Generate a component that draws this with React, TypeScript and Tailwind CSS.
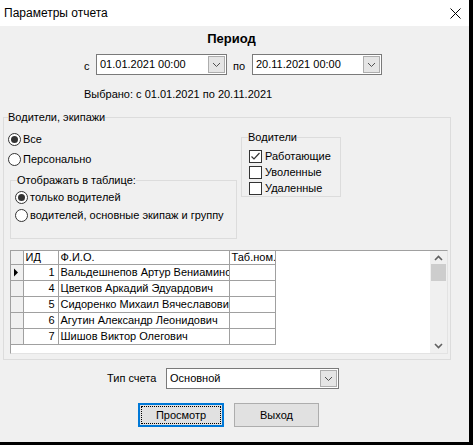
import React from 'react';

const rows = [
  { id: 1, name: 'Вальдешнепов Артур Вениаминович' },
  { id: 4, name: 'Цветков Аркадий Эдуардович' },
  { id: 5, name: 'Сидоренко Михаил Вячеславович' },
  { id: 6, name: 'Агутин Александр Леонидович' },
  { id: 7, name: 'Шишов Виктор Олегович' },
];

function Chevron({ up = false, bold = false }: { up?: boolean; bold?: boolean }) {
  return (
    <svg width="9" height="6" viewBox="0 0 9 6" className={up ? 'rotate-180' : ''}>
      <polyline
        points="1,1 4.5,4.5 8,1"
        fill="none"
        stroke={bold ? '#606060' : '#505050'}
        strokeWidth={bold ? 1.6 : 1}
      />
    </svg>
  );
}

function Combo({ value, width }: { value: string; width: string }) {
  return (
    <div className={`flex h-[21px] items-stretch border border-[#7a7a7a] bg-white ${width}`}>
      <span className="flex-1 overflow-hidden whitespace-nowrap pl-[3px] leading-[19px]">{value}</span>
      <span className="m-px flex w-[17px] items-center justify-center border border-[#adadad] bg-[#e5e5e5]">
        <Chevron />
      </span>
    </div>
  );
}

function Radio({ checked, label }: { checked?: boolean; label: string }) {
  return (
    <div className="flex h-[14px] items-center gap-[2px]">
      <span className="flex h-[13px] w-[13px] items-center justify-center rounded-full border border-[#333333] bg-white">
        {checked && <span className="h-[7px] w-[7px] rounded-full bg-[#333333]" />}
      </span>
      <span className="leading-[14px]">{label}</span>
    </div>
  );
}

function Check({ checked, label }: { checked?: boolean; label: string }) {
  return (
    <div className="flex h-[16px] items-center gap-[3px]">
      <span className="flex h-[13px] w-[13px] items-center justify-center border border-[#333333] bg-white">
        {checked && (
          <svg width="11" height="11" viewBox="0 0 11 11">
            <polyline points="1.5,5.5 4,8 9.5,2" fill="none" stroke="#333333" strokeWidth="1.2" />
          </svg>
        )}
      </span>
      <span className="leading-[14px]">{label}</span>
    </div>
  );
}

function Grid() {
  return (
    <div className="relative ml-[6px] mt-[11px] h-[104px] w-[438px] border border-t-[#a0a0a0] border-l-[#a0a0a0] border-r-[#e3e3e3] border-b-[#e3e3e3] bg-white">
      <table className="border-collapse text-[11px]">
        <thead>
          <tr className="h-[13px]">
            <th className="w-[12px] border-r border-b border-[#a0a0a0] bg-[#f0f0f0] p-0" />
            <th className="w-[35px] border-r border-b border-[#a0a0a0] p-0 pl-[2px] text-left font-normal leading-[12px]">ИД</th>
            <th className="w-[171px] border-r border-b border-[#a0a0a0] p-0 pl-[2px] text-left font-normal leading-[12px]">Ф.И.О.</th>
            <th className="w-[46px] max-w-[46px] overflow-hidden whitespace-nowrap border-r border-b border-[#a0a0a0] p-0 pl-[2px] text-left font-normal leading-[12px]">
              Таб.ном.
            </th>
          </tr>
        </thead>
        <tbody>
          {rows.map((r, i) => (
            <tr key={r.id} className="h-[16px]">
              <td className="border-r border-b border-[#a0a0a0] bg-[#f0f0f0] p-0">
                {i === 0 && (
                  <svg width="8" height="9" viewBox="0 0 8 9" className="ml-[2px]">
                    <polygon points="1,0.5 5,4.5 1,8.5" fill="#000" />
                  </svg>
                )}
              </td>
              <td className="border-r border-b border-[#a0a0a0] p-0 pr-[3px] text-right leading-[15px]">{r.id}</td>
              <td className="max-w-[171px] overflow-hidden whitespace-nowrap border-r border-b border-[#a0a0a0] p-0 pl-[2px] leading-[15px]">
                {r.name}
              </td>
              <td className="border-r border-b border-[#a0a0a0] p-0" />
            </tr>
          ))}
        </tbody>
      </table>
      <div className="absolute top-0 right-0 bottom-0 flex w-[17px] flex-col items-center bg-[#f0f0f0]">
        <div className="flex h-[13px] items-center">
          <Chevron up bold />
        </div>
        <div className="h-[17px] w-[15px] bg-[#cdcdcd]" />
        <div className="flex-1" />
        <div className="flex h-[15px] items-center">
          <Chevron bold />
        </div>
      </div>
    </div>
  );
}

export default function App() {
  return (
    <div className="h-[445px] w-[473px] overflow-hidden bg-black font-['Liberation_Sans',Arial,sans-serif] text-[11px] text-black">
      <div className="flex h-[442px] w-[469px] flex-col bg-[#f0f0f0]">
        {/* title bar */}
        <div className="flex h-[26px] items-center justify-between bg-white pl-[4px] pr-[8px]">
          <span className="text-[12px]">Параметры отчета</span>
          <svg width="11" height="11" viewBox="0 0 11 11">
            <path d="M0.5 0.5 L10.5 10.5 M10.5 0.5 L0.5 10.5" stroke="#000" strokeWidth="1" />
          </svg>
        </div>

        {/* period */}
        <div className="mt-[5px] pr-[6px] text-center text-[13px] font-bold leading-[15px]">Период</div>
        <div className="mt-[8px] flex items-center pl-[84px]">
          <span className="mt-[3px] w-[12px]">с</span>
          <Combo value="01.01.2021 00:00" width="w-[131px]" />
          <span className="mt-[3px] ml-[6px] w-[19px]">по</span>
          <Combo value="20.11.2021 00:00" width="w-[130px]" />
        </div>
        <div className="mt-[13px] pl-[84px] leading-[13px]">Выбрано: с 01.01.2021 по 20.11.2021</div>

        {/* drivers group */}
        <fieldset className="mt-[10px] ml-[3px] w-[448px] border border-[#dcdcdc] pb-[5px]">
          <legend className="ml-[4px] leading-[13px]">Водители, экипажи</legend>
          <div className="flex">
            <div className="w-[233px]">
              <div className="mt-[8px] flex flex-col gap-[6px] pl-[4px]">
                <Radio checked label="Все" />
                <Radio label="Персонально" />
              </div>
              <fieldset className="mt-[8px] ml-[6px] h-[65px] w-[227px] border border-[#dcdcdc]">
                <legend className="ml-[6px] leading-[13px]">Отображать в таблице:</legend>
                <div className="mt-[3px] flex flex-col gap-[4px] pl-[4px]">
                  <Radio checked label="только водителей" />
                  <Radio label="водителей, основные экипаж и группу" />
                </div>
              </fieldset>
            </div>
            <fieldset className="mt-[7px] ml-[4px] h-[66px] w-[100px] border border-[#dcdcdc]">
              <legend className="ml-[6px] leading-[13px]">Водители</legend>
              <div className="mt-[4px] flex flex-col pl-[7px]">
                <Check checked label="Работающие" />
                <Check label="Уволенные" />
                <Check label="Удаленные" />
              </div>
            </fieldset>
          </div>
          <Grid />
        </fieldset>

        {/* account type */}
        <div className="mt-[8px] flex items-center pl-[107px]">
          <span className="w-[59px]">Тип счета</span>
          <Combo value="Основной" width="w-[173px]" />
        </div>

        {/* buttons */}
        <div className="mt-[14px] flex gap-[10px] pl-[138px]">
          <button className="h-[24px] w-[86px] border-2 border-[#0078d7] bg-[#e1e1e1] p-[1px]">
            <span className="flex h-full w-full items-center justify-center border border-dotted border-black">Просмотр</span>
          </button>
          <button className="h-[24px] w-[85px] border border-[#adadad] bg-[#e1e1e1]">Выход</button>
        </div>
      </div>
    </div>
  );
}
